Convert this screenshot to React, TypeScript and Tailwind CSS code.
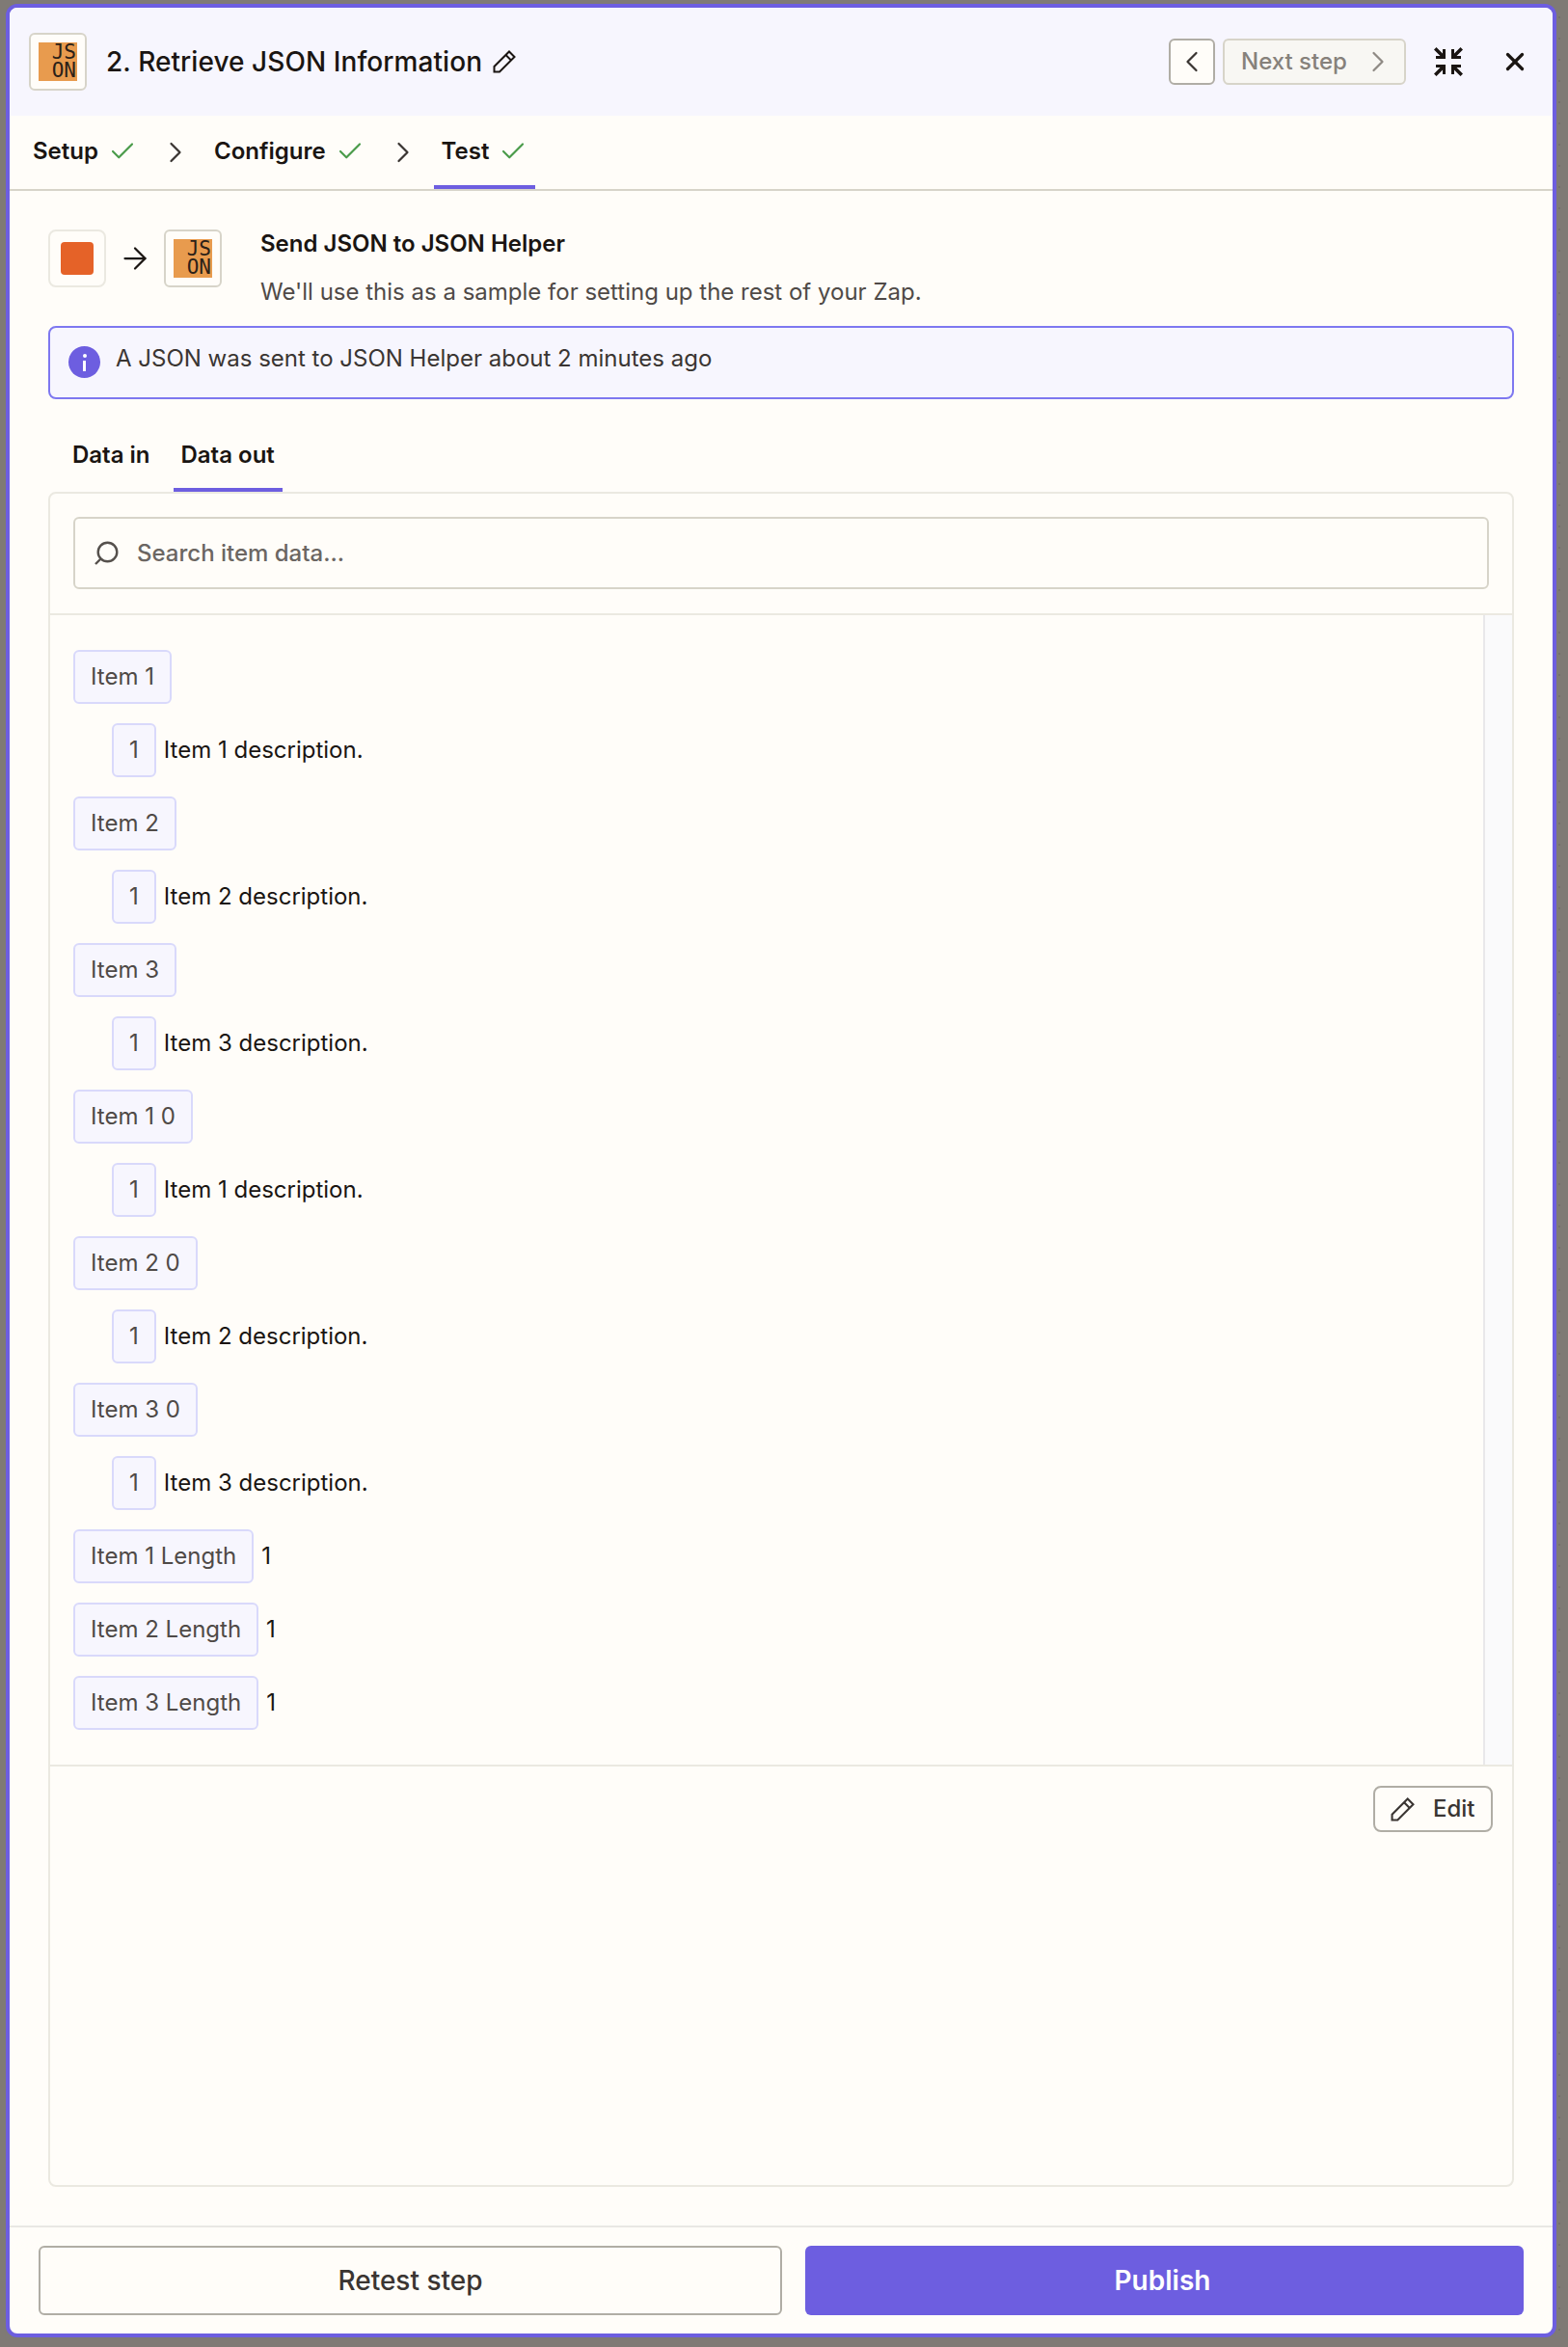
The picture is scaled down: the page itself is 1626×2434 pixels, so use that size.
import React from 'react';
import { Check, ChevronLeft, ChevronRight, X, ArrowRight } from 'lucide-react';

const JsonLogo = () => (
  <div className="w-10 h-10 bg-[#e89b4e] pr-[1px] pt-[1px] text-right whitespace-pre font-['DejaVu_Sans_Mono',monospace] text-[21px] leading-[19px] text-[#2b2118]">
    {'JS\nON'}
  </div>
);

const PencilIcon = ({ className }: { className: string }) => (
  <svg viewBox="0 0 24 24" fill="none" stroke="currentColor" strokeWidth="2" className={className}>
    <path d="M1.5 22.5V17L17 1.5l5.5 5.5L7 22.5H1.5Z" />
    <path d="M13.5 5l5.5 5.5" />
  </svg>
);

const CollapseIcon = () => (
  <svg viewBox="0 0 32 32" fill="#1a1512" className="w-8 h-8">
    <path d="M1 3.5 3.5 1 10 7.5V3h3v10H3v-3h4.5L1 3.5Z" />
    <path d="M31 3.5 28.5 1 22 7.5V3h-3v10h10v-3h-4.5L31 3.5Z" />
    <path d="M1 28.5 3.5 31 10 24.5V29h3V19H3v3h4.5L1 28.5Z" />
    <path d="M31 28.5 28.5 31 22 24.5V29h-3V19h10v3h-4.5L31 28.5Z" />
  </svg>
);

const SearchIcon = () => (
  <svg viewBox="0 0 26 26" fill="none" stroke="#55504c" strokeWidth="2.4" className="w-[26px] h-[26px]">
    <circle cx="14.5" cy="11.5" r="9.8" />
    <path d="M7.5 18.5 2 24" />
  </svg>
);

const InfoIcon = () => (
  <div className="w-[33px] h-[33px] rounded-full bg-[#6d5ee0] flex flex-col items-center justify-center gap-[3px]">
    <span className="w-[4px] h-[4px] rounded-full bg-white" />
    <span className="w-[3px] h-[11px] bg-white" />
  </div>
);

const Chip = ({ label }: { label: string }) => (
  <span className="h-14 px-4 flex items-center border-2 border-[#d9d9fb] bg-[#f7f6fe] rounded-[6px] text-[#4f4a47]">{label}</span>
);

const rows = [
  { label: 'Item 1', sub: 'Item 1 description.' },
  { label: 'Item 2', sub: 'Item 2 description.' },
  { label: 'Item 3', sub: 'Item 3 description.' },
  { label: 'Item 1 0', sub: 'Item 1 description.' },
  { label: 'Item 2 0', sub: 'Item 2 description.' },
  { label: 'Item 3 0', sub: 'Item 3 description.' },
];

const lengths = ['Item 1 Length', 'Item 2 Length', 'Item 3 Length'];

const Step = ({ label, active }: { label: string; active?: boolean }) => (
  <div className={`h-full px-2 pt-[2px] flex items-center gap-[10px] font-semibold border-b-4 ${active ? 'border-[#6d5ee0]' : 'border-transparent'}`}>
    <span>{label}</span>
    <Check className="w-[30px] h-[30px] text-[#4a9b4a]" strokeWidth={1.7} />
  </div>
);

const StepArrow = () => (
  <ChevronRight className="ml-[14px] mr-[14px] w-9 h-9 text-[#3a3532]" strokeWidth={1.5} />
);

export default function App() {
  return (
    <div className="h-[2434px] bg-[#7f7a75] pt-1 pl-[6px] flex font-['Inter',sans-serif] text-[24px] text-[#1a1512]">
      <div className="w-[1608px] h-[2420px] shrink-0 border-4 border-[#6d5ee0] rounded-[12px] bg-[#fffdf9] flex flex-col overflow-hidden">
        {/* Header */}
        <div className="h-[112px] shrink-0 bg-[#f7f6fe] flex items-center pl-5 pr-[24px]">
          <div className="w-[60px] h-[60px] border-2 border-[#d7d4c9] rounded-[6px] bg-[#fffdf9] flex items-center justify-center">
            <JsonLogo />
          </div>
          <span className="ml-5 text-[28px] font-medium tracking-[0.07px]">2. Retrieve JSON Information</span>
          <PencilIcon className="ml-[11px] w-6 h-6" />
          <div className="ml-auto flex items-center">
            <button className="w-12 h-12 border-2 border-[#b0ada5] rounded-[6px] bg-[#fffdf9] flex items-center justify-center">
              <ChevronLeft className="w-9 h-9 shrink-0 text-[#3a3532]" strokeWidth={1.5} />
            </button>
            <button className="ml-2 w-[190px] h-12 border-2 border-[#d7d4c9] rounded-[6px] bg-[#f8f7f3] flex items-center pl-[17px] text-[#86817b] font-medium">
              Next step
              <ChevronRight className="ml-auto mr-[9px] w-9 h-9 text-[#8f8a84]" strokeWidth={1.5} />
            </button>
            <div className="ml-7">
              <CollapseIcon />
            </div>
            <X className="ml-[38px] w-[30px] h-[30px]" strokeWidth={2.6} />
          </div>
        </div>

        {/* Steps */}
        <div className="h-[78px] shrink-0 border-b-2 border-[#d7d4c9] flex items-center pl-4">
          <Step label="Setup" />
          <StepArrow />
          <Step label="Configure" />
          <StepArrow />
          <Step label="Test" active />
        </div>

        {/* Body */}
        <div className="flex-1 min-h-0 px-10 pt-10 pb-10 flex flex-col">
          <div className="flex">
            <div className="w-[60px] h-[60px] border-2 border-[#ebe9e1] rounded-[8px] flex items-center justify-center">
              <div className="w-[34px] h-[34px] rounded-[4px] bg-[#e56228]" />
            </div>
            <ArrowRight className="m-3 w-9 h-9" strokeWidth={1.5} />
            <div className="w-[60px] h-[60px] border-2 border-[#d7d4c9] rounded-[6px] flex items-center justify-center">
              <JsonLogo />
            </div>
            <div className="ml-10">
              <div className="mt-[1px] font-semibold leading-[28px]">Send JSON to JSON Helper</div>
              <div className="mt-[22px] leading-[28px] text-[#4f4a47]">We'll use this as a sample for setting up the rest of your Zap.</div>
            </div>
          </div>

          <div className="mt-[21px] h-[76px] border-2 border-[#7e78f0] rounded-[8px] bg-[#f7f6fe] flex items-start pt-[19px] pl-[19px] gap-[16px] text-[#3a3532]">
            <InfoIcon />
            <span className="-mt-px leading-[28px]">A JSON was sent to JSON Helper about 2 minutes ago</span>
          </div>

          <div className="mt-[24px] h-[72px] flex gap-4 pl-[17px] font-semibold">
            <div className="h-full px-2 flex items-center border-b-4 border-transparent">Data in</div>
            <div className="h-full px-2 flex items-center border-b-4 border-[#6d5ee0]">Data out</div>
          </div>

          <div className="flex-1 min-h-0 border-2 border-[#ebe9e1] rounded-[8px] flex flex-col">
            <div className="h-[126px] shrink-0 px-6 pt-6 border-b-2 border-[#ebe9e1]">
              <div className="h-[75px] border-2 border-[#d7d4c9] rounded-[6px] flex items-center pl-[19px] gap-[19px] text-[#6b6662] font-medium">
                <SearchIcon />
                <span>Search item data...</span>
              </div>
            </div>

            <div className="h-[1194px] shrink-0 flex border-b-2 border-[#ebe9e1]">
              <div className="flex-1 pl-6 pt-9 flex flex-col gap-5">
                {rows.map((r) => (
                  <React.Fragment key={r.label}>
                    <div className="flex">
                      <Chip label={r.label} />
                    </div>
                    <div className="flex items-center gap-2 pl-10">
                      <Chip label="1" />
                      <span>{r.sub}</span>
                    </div>
                  </React.Fragment>
                ))}
                {lengths.map((l) => (
                  <div key={l} className="flex items-center gap-2">
                    <Chip label={l} />
                    <span>1</span>
                  </div>
                ))}
              </div>
              <div className="w-[30px] border-l-2 border-[#e9e8ea] bg-[#fafafb]" />
            </div>

            <div className="flex justify-end pt-5 pr-[20px]">
              <button className="w-[124px] h-12 border-2 border-[#b0ada5] rounded-[8px] flex items-center pl-4 gap-[19px] text-[#3a3532] font-medium">
                <PencilIcon className="w-[25px] h-[25px]" />
                Edit
              </button>
            </div>
          </div>
        </div>

        {/* Footer */}
        <div className="h-[112px] shrink-0 border-t-2 border-[#e9e8e4] px-[30px] pt-[19px] flex gap-6 text-[28px] font-medium">
          <button className="w-[771px] h-[72px] border-2 border-[#b0ada5] rounded-[6px] text-[#3a3532]">Retest step</button>
          <button className="flex-1 h-[72px] pr-1 rounded-[6px] bg-[#6d5ee0] text-white font-semibold">Publish</button>
        </div>
      </div>
      <div className="ml-[2px] mt-[13px] w-[2px] h-[2400px] bg-[repeating-linear-gradient(to_bottom,#74706b_0,#74706b_2px,transparent_2px,transparent_22px)]" />
    </div>
  );
}
